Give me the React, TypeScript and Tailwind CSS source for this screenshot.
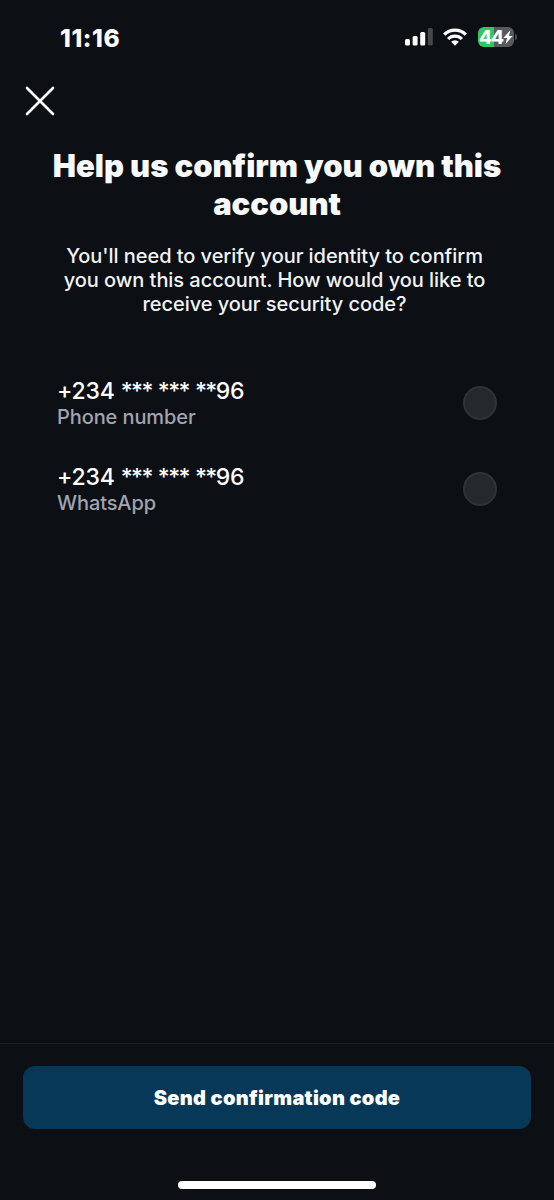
import React, { useState } from "react";

interface DeliveryOption {
   id: string;
   value: string;
   label: string;
}

const options: DeliveryOption[] = [
   { id: "sms", value: "+234 *** *** **96", label: "Phone number" },
   { id: "whatsapp", value: "+234 *** *** **96", label: "WhatsApp" },
];

const SignalIcon = () => (
   <svg width="28" height="20" viewBox="0 0 28 20" fill="#fff">
      <rect x="0" y="12" width="5" height="6.5" rx="1.5" />
      <rect x="7.6" y="9" width="5" height="9.5" rx="1.5" />
      <rect x="15.2" y="5" width="5" height="13.5" rx="1.5" />
      <rect x="22.8" y="1" width="5" height="17.5" rx="1.5" fill="#45474b" />
   </svg>
);

const WifiIcon = () => (
   <svg width="24" height="18" viewBox="0 0 24 18" fill="none" stroke="#fff" strokeWidth="3.2">
      <path d="M1.2 6.6a15.2 15.2 0 0 1 21.6 0" />
      <path d="M5.1 11a9.7 9.7 0 0 1 13.8 0" />
      <path d="M12 17.8l-3.9-4a5.5 5.5 0 0 1 7.8 0z" fill="#fff" stroke="none" />
   </svg>
);

const Battery = () => (
   <div className="flex items-center gap-[1px]">
      <div className="flex h-5 w-[36px] items-center justify-center rounded-[6px] bg-[linear-gradient(to_right,#34c759_44%,#58595d_44%)]">
         <span className="pt-px text-[19px] leading-5 font-extrabold tracking-[-1px]">44</span>
         <svg width="10" height="14" viewBox="0 0 9 13" fill="#fff">
            <path d="M6.8 0L0.2 7.4h3.5L2.2 13l6.6-7.4H5.3z" />
         </svg>
      </div>
      <div className="h-[6px] w-[2px] rounded-r-full bg-[#45474b]" />
   </div>
);

// Masked digits are set tighter than the visible ones
const MaskedNumber = ({ value }: { value: string }) => (
   <>
      {value.split(/(\*+)/).map((part, index) =>
         part.startsWith("*") ? (
            <span key={index} className="tracking-[-1.6px]">
               {part}
            </span>
         ) : (
            <span key={index}>{part}</span>
         )
      )}
   </>
);

const App = () => {
   const [selected, setSelected] = useState<string | null>(null);

   return (
      <div className="flex h-[1200px] w-[554px] flex-col overflow-hidden bg-[#0c0f14] font-['Inter',sans-serif] text-white">
         <div className="flex h-[74px] items-center justify-between pr-[37px] pl-[60px]">
            <span className="pt-[2px] text-[24.5px] leading-[30px] font-extrabold tracking-[0.6px]">11:16</span>
            <div className="flex items-center">
               <SignalIcon />
               <div className="ml-[10px]">
                  <WifiIcon />
               </div>
               <div className="ml-[11px]">
                  <Battery />
               </div>
            </div>
         </div>

         <button type="button" aria-label="Close" className="ml-[25px] h-[54px] w-[30px]">
            <svg width="30" height="30" viewBox="0 0 30 30" stroke="#fff" strokeWidth="2.6" strokeLinecap="round">
               <path d="M2 2l26 26M28 2L2 28" />
            </svg>
         </button>

         <div className="mt-[19px] text-center">
            <h1 className="text-[31px] leading-[38px] font-black tracking-[-0.03px] text-[#f8f9fa]">
               Help us confirm you own this
               <br />
               account
            </h1>
            <p className="mt-[21px] pr-[5px] text-[20px] leading-6 font-medium tracking-[-0.05px] text-[#f1f3f5]">
               You'll need to verify your identity to confirm
               <br />
               you own this account. How would you like to
               <br />
               receive your security code?
            </p>
         </div>

         <div className="mt-[61px] flex flex-col gap-[34px] px-[57px]">
            {options.map((option) => (
               <div
                  key={option.id}
                  onClick={() => setSelected(option.id)}
                  className="flex h-[52px] cursor-pointer items-center justify-between"
               >
                  <div className="pt-[2px]">
                     <div className="text-[23px] leading-[26px] font-medium tracking-[-0.15px]">
                        <MaskedNumber value={option.value} />
                     </div>
                     <div className="text-[20px] leading-[26px] font-medium tracking-[-0.1px] text-[#a0a5b0]">
                        {option.label}
                     </div>
                  </div>
                  <div
                     className={
                        selected === option.id
                           ? "size-[34px] rounded-full border-[10px] border-[#1d78b5] bg-white"
                           : "size-[34px] rounded-full border-2 border-[#303338] bg-[#25282d]"
                     }
                  />
               </div>
            ))}
         </div>

         <div className="mt-auto flex h-[157px] flex-col items-center border-t border-[#1d2126] pt-[22px]">
            <button
               type="button"
               className="h-[63px] w-[508px] rounded-[12px] bg-[#073857] text-[20px] font-black tracking-[0.3px]"
            >
               Send confirmation code
            </button>
            <div className="mt-[52px] h-[8px] w-[198px] rounded-full bg-white" />
         </div>
      </div>
   );
};

export default App;
